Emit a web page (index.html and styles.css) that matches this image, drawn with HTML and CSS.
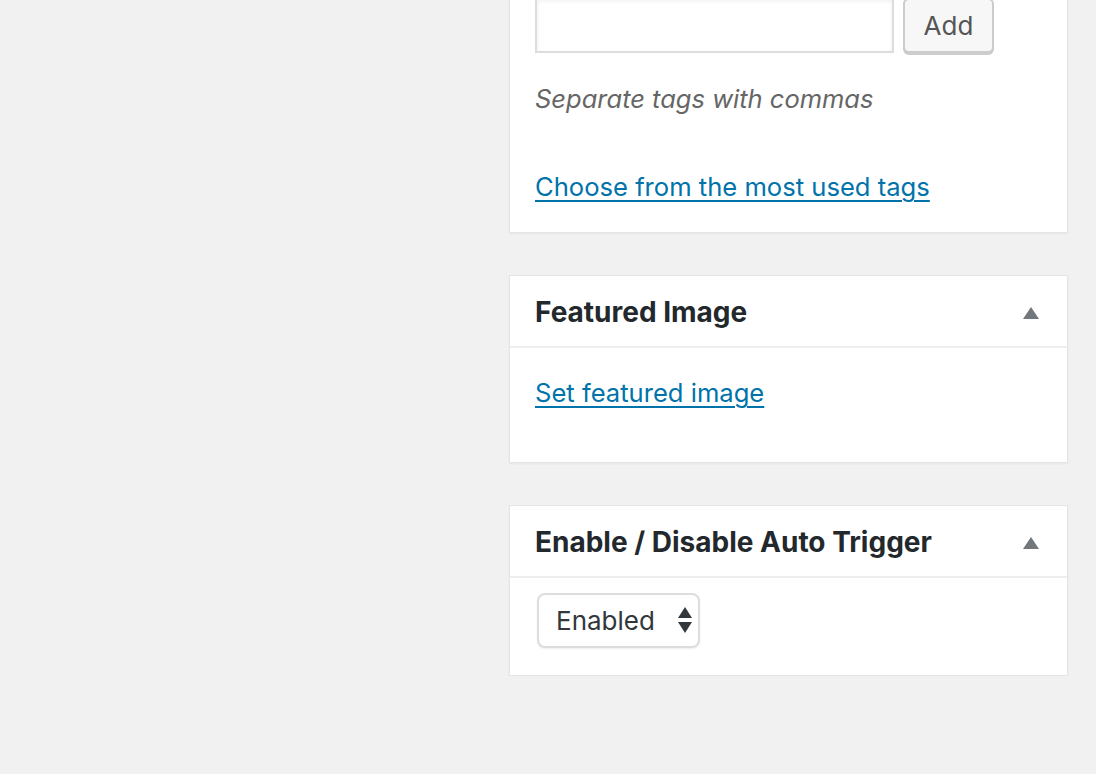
FILE: index.html
```html
<!DOCTYPE html>
<html>
<head>
<meta charset="utf-8">
<link rel="stylesheet" href="styles.css">
</head>
<body>
<div class="page">
  <div class="sidebar">
    <div class="postbox tags-box">
      <div class="inside tags-inside">
        <div class="tag-row">
          <input class="tag-input" type="text">
          <button class="button">Add</button>
        </div>
        <p class="howto">Separate tags with commas</p>
        <p class="most-used"><a href="#" class="link">Choose from the most used tags</a></p>
      </div>
    </div>

    <div class="postbox">
      <div class="hndle">
        <h2 class="hndle-title">Featured Image</h2>
        <svg class="toggle" width="16" height="12" viewBox="0 0 16 12"><polygon points="8,0 16,12 0,12" fill="#72777c"/></svg>
      </div>
      <div class="inside featured-inside">
        <a href="#" class="link">Set featured image</a>
      </div>
    </div>

    <div class="postbox">
      <div class="hndle">
        <h2 class="hndle-title">Enable / Disable Auto Trigger</h2>
        <svg class="toggle" width="16" height="12" viewBox="0 0 16 12"><polygon points="8,0 16,12 0,12" fill="#72777c"/></svg>
      </div>
      <div class="inside trigger-inside">
        <div class="select-wrap">
          <select class="select">
            <option>Enabled</option>
            <option>Disabled</option>
          </select>
          <svg class="select-arrows" width="14" height="26" viewBox="0 0 14 26"><polygon points="7,0 14,11 0,11" fill="#32373c"/><polygon points="0,15 14,15 7,26" fill="#32373c"/></svg>
        </div>
      </div>
    </div>
  </div>
</div>
</body>
</html>
```

FILE: styles.css
```css
* { box-sizing: border-box; }
html, body {
  margin: 0;
  padding: 0;
  background: #f1f1f1;
  font-family: Inter, Roboto, "Liberation Sans", sans-serif;
  color: #444;
  overflow: hidden;
}
.page {
  display: flex;
  padding-left: 509px;
}
.sidebar {
  width: 559px;
  display: flex;
  flex-direction: column;
  gap: 42px;
}
.postbox {
  background: #fff;
  border: 1px solid #e5e5e5;
  box-shadow: 0 1px 2px rgba(0,0,0,0.05);
}
.tags-box {
  margin-top: -40px;
  border-top: none;
}
.inside {
  padding: 0 24px 0 25px;
}
.tags-inside {
  padding-bottom: 26px;
}
.tag-row {
  display: flex;
  align-items: flex-start;
  gap: 9px;
}
.tag-input {
  width: 359px;
  height: 56px;
  margin-top: 37px;
  border: 2px solid #ddd;
  box-shadow: inset 0 2px 4px rgba(0,0,0,0.07);
  background: #fff;
  padding: 0 12px;
  font-size: 26px;
  outline: none;
}
.button {
  margin-top: 38px;
  width: 91px;
  height: 55px;
  background: #f7f7f7;
  border: 2px solid #ccc;
  border-radius: 6px;
  box-shadow: 0 2px 0 #ccc;
  color: #555;
  font-family: Inter, Roboto, "Liberation Sans", sans-serif;
  font-size: 26px;
  padding: 0;
}
.howto {
  margin: 26px 0 0;
  font-style: italic;
  color: #666;
  font-size: 25.5px;
  line-height: 39px;
}
.most-used {
  margin: 49px 0 0;
  font-size: 25.6px;
  line-height: 39px;
}
.link {
  color: #0073aa;
  text-decoration: underline;
  text-decoration-thickness: 2px;
  text-underline-offset: 4px;
  font-size: 25.6px;
}
.hndle {
  display: flex;
  align-items: center;
  justify-content: space-between;
  height: 72px;
  padding: 0 28px 0 25px;
  border-bottom: 2px solid #eee;
}
.hndle-title {
  margin: 0;
  font-size: 28px;
  font-weight: 700;
  color: #23282d;
  line-height: 39px;
  padding-top: 2px;
}
.toggle {
  display: block;
  margin-top: 4px;
}
.featured-inside {
  padding-top: 25px;
  padding-bottom: 46px;
  line-height: 39px;
}
.trigger-inside {
  padding-top: 15px;
  padding-bottom: 27px;
  padding-left: 27px;
}
.select-wrap {
  position: relative;
  width: 163px;
  height: 55px;
}
.select {
  appearance: none;
  -webkit-appearance: none;
  width: 163px;
  height: 55px;
  border: 2px solid #ddd;
  border-radius: 8px;
  background: #fff;
  box-shadow: 0 1px 2px rgba(0,0,0,0.07);
  padding: 0 40px 0 17px;
  font-family: Inter, Roboto, "Liberation Sans", sans-serif;
  font-size: 26px;
  color: #32373c;
  outline: none;
}
.select-arrows {
  position: absolute;
  right: 8px;
  top: 14px;
  pointer-events: none;
}
```
